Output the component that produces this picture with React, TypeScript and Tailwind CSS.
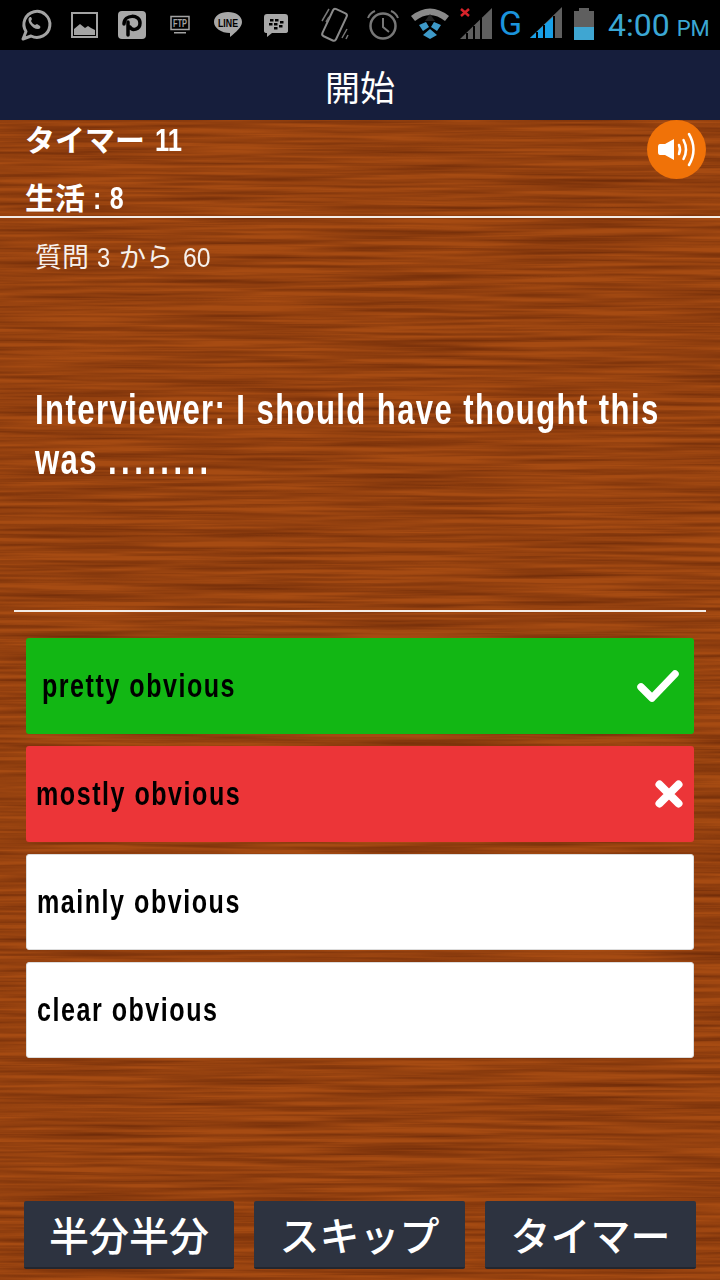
const sans = "font-['Liberation_Sans','Noto_Sans_CJK_JP',sans-serif]";

// Notification icons on the left of the status bar
const StatusLeft = () => (
  <svg width="360" height="50" viewBox="0 0 360 50" className="shrink-0">
    {/* whatsapp */}
    <path d="M23 39l3-7.500a13 13 0 1 1 5 4.500z" fill="none" stroke="#a3a3a3" strokeWidth="3" strokeLinejoin="round" />
    <path d="M30 17c-2 1-2 4 0 7s5 5 8 5c2 0 3-2 2-3l-3-2-2 1c-2-1-3-2-4-4l1-2-1-2z" fill="#a3a3a3" />
    {/* gallery */}
    <rect x="72" y="13" width="25" height="24" fill="none" stroke="#a3a3a3" strokeWidth="2" />
    <path d="M74 35v-6l6-5 5 4 3-2 3 2 4 2v5z" fill="#a3a3a3" />
    {/* pinterest-style tile */}
    <rect x="118" y="11" width="28" height="28" rx="4" fill="#a8a8a8" />
    <path d="M128 35V22M124 24c0-10 16-10 16-1 0 7-8 8-10 4" fill="none" stroke="#000" strokeWidth="3.500" strokeLinecap="round" />
    {/* ftp */}
    <rect x="171" y="16.500" width="18" height="13" fill="none" stroke="#a3a3a3" strokeWidth="1.500" />
    <text x="180" y="27" textAnchor="middle" fontSize="10" fontWeight="700" fill="#a3a3a3" fontFamily="Liberation Sans, sans-serif" textLength="14" lengthAdjust="spacingAndGlyphs">FTP</text>
    <rect x="174" y="32" width="12" height="1.500" fill="#a3a3a3" />
    {/* line */}
    <path d="M228 12c8 0 14 4 14 10 0 5-6 10-12 15v-4c-9 0-16-5-16-11 0-6 6-10 14-10z" fill="#a8a8a8" />
    <text x="228" y="26.500" textAnchor="middle" fontSize="11" fontWeight="700" fill="#000" fontFamily="Liberation Sans, sans-serif" textLength="20" lengthAdjust="spacingAndGlyphs">LINE</text>
    {/* bbm */}
    <path d="M268 14h17q3 0 3 3v14q0 2-3 2h-13l-5 4v-4q-3 0-3-2v-14q0-3 3-3z" fill="#a8a8a8" />
    <g fill="#000">
      <rect x="270" y="19" width="3.500" height="2.500" />
      <rect x="275" y="19" width="3.500" height="2.500" />
      <rect x="269" y="23" width="3.500" height="2.500" />
      <rect x="274" y="23" width="3.500" height="2.500" />
      <rect x="280" y="21" width="3.500" height="2.500" />
      <rect x="279" y="25" width="3.500" height="2.500" />
      <rect x="274" y="27" width="3.500" height="2.500" />
    </g>
    {/* vibrate */}
    <rect x="327" y="10" width="15" height="30" rx="2.500" transform="rotate(25 335 25)" fill="none" stroke="#8a8a8a" strokeWidth="2" />
    <path d="M322 21l7-12M326 22l3-5M342 38l5-9M346 39l2-4" stroke="#777" strokeWidth="1.500" fill="none" />
  </svg>
);

// Alarm, wifi, signal and battery on the right
const StatusRight = () => (
  <svg width="360" height="50" viewBox="360 0 360 50" className="shrink-0">
    <circle cx="383" cy="26" r="12.500" fill="none" stroke="#777" strokeWidth="2.500" />
    <path d="M383 18v9l6 5" fill="none" stroke="#777" strokeWidth="2" />
    <path d="M368 18q2-5 7-7M391 11q5 2 7 7" fill="none" stroke="#777" strokeWidth="2" />
    {/* wifi */}
    <path d="M411 16q19-15 38 0l-4 5q-15-12-30 0z" fill="#8a8a8a" />
    <path d="M430 14l5 7h-10z" fill="#222" />
    <path d="M419 25l7-3 3 5-6 4zM441 25l-7-3-3 5 6 4zM430 29l7 6-7 4-7-4z" fill="#3e9ac9" />
    {/* first sim */}
    <path d="M461 9l8 7M469 9l-8 7" stroke="#d8232a" strokeWidth="2.500" fill="none" />
    <path d="M460 39l32-31v31z" fill="#5f5f5f" />
    <path d="M467 33v6M474 26v13M481 18v21" stroke="#000" strokeWidth="2" />
    {/* second sim */}
    <text x="499" y="35" fontSize="34" fill="#1b94dc" fontFamily="Roboto, sans-serif">G</text>
    <path d="M530 38l32-31v31z" fill="#5f5f5f" />
    <path d="M530 38l13-12v12zM544 25l10-9v22h-10z" fill="#18a0e8" />
    <path d="M537 32v6M544 25v13M554 16v22" stroke="#000" strokeWidth="2" />
    {/* battery */}
    <rect x="574" y="11" width="20" height="29" fill="#5f5f5f" />
    <rect x="579" y="8" width="10" height="3" fill="#5f5f5f" />
    <rect x="574" y="27" width="20" height="13" fill="#3fa6d2" />
  </svg>
);

const answerText = `inline-block origin-left whitespace-nowrap scale-x-[0.76] text-[33px] tracking-[2px] font-bold text-black ${sans}`;

const App = () => {
  return (
    <div className={`relative w-[720px] h-[1280px] overflow-hidden flex flex-col bg-[#9c4310] ${sans}`}>
      <div className="relative h-[50px] bg-black flex shrink-0">
        <StatusLeft />
        <StatusRight />
        <span className="absolute left-[608px] top-[5px] leading-[40px] text-[#3ba7d4] font-['Roboto',sans-serif] whitespace-nowrap">
          <span className="text-[32px]">4:00</span>
          <span className="text-[22px] ml-[7px]">PM</span>
        </span>
      </div>
      <div className="h-[70px] bg-[#161e3c] flex items-center justify-center shrink-0 text-white text-[35px] leading-none font-['Noto_Sans_CJK_JP',sans-serif]">
        開始
      </div>

      <div className="relative flex-1 flex flex-col">
        {/* wood grain */}
        <svg className="absolute inset-0 w-full h-full" xmlns="http://www.w3.org/2000/svg">
          <filter id="grain" x="0" y="0" width="100%" height="100%" colorInterpolationFilters="sRGB">
            <feTurbulence type="fractalNoise" baseFrequency="0.006 0.22" numOctaves="3" seed="7" />
            <feColorMatrix values="0 0 0 0 0.42  0 0 0 0 0.16  0 0 0 0 0.03  1.5 0 0 0 -0.45" />
          </filter>
          <rect width="100%" height="100%" fill="#a64b12" />
          <rect width="100%" height="100%" filter="url(#grain)" />
        </svg>

        <div className="relative flex flex-col flex-1">
          <div className="relative h-[98px] border-b-2 border-[#f3ece6]">
            <p className="absolute left-[25px] top-[-2px] text-[30px] leading-[40px] font-bold text-white whitespace-nowrap">
              <span className="font-['Noto_Sans_CJK_JP',sans-serif]">タイマー</span>
              <span className="inline-block origin-left scale-x-[0.8] ml-[10px] text-[32px]">11</span>
            </p>
            <p className="absolute left-[25px] top-[56px] text-[30px] leading-[40px] font-bold text-white whitespace-nowrap">
              <span className="font-['Noto_Sans_CJK_JP',sans-serif]">生活</span>
              <span className="inline-block origin-left scale-x-[0.78] ml-[8px] text-[32px] tracking-[1px]">: 8</span>
            </p>
            <button className="absolute left-[647px] top-[0px] w-[59px] h-[59px] rounded-full bg-[#f07208] flex items-center justify-center">
              <svg width="42" height="42" viewBox="0 0 42 42">
                <path d="M2 18q0-3 2-3h5l9-5v21l-9-5H4q-2 0-2-3z" fill="#fff" />
                <g fill="none" stroke="#fff" strokeWidth="2.500" strokeLinecap="round">
                  <path d="M23 16q2 4.500 0 9" />
                  <path d="M27.500 11q5 9.500 0 19" />
                  <path d="M33 5q9 15.500 0 31" />
                </g>
              </svg>
            </button>
          </div>
          <p className="mt-[20px] ml-[35px] h-[36px] text-[27px] leading-[36px] text-[#f7f1ec] whitespace-nowrap">
            <span className="font-['Noto_Sans_CJK_JP',sans-serif]">質問</span>
            <span className="inline-block w-[22px] ml-[8px] origin-left scale-x-[0.88]">3</span>
            <span className="font-['Noto_Sans_CJK_JP',sans-serif]">から</span>
            <span className="inline-block ml-[10px] origin-left scale-x-[0.92]">60</span>
          </p>

          <div className="mt-[111px] ml-[35px] h-[225px] text-[42px] leading-[50px] font-bold text-white">
            <p className="origin-left scale-x-[0.74] whitespace-nowrap tracking-[1.9px]">Interviewer: I should have thought this</p>
            <p className="origin-left scale-x-[0.74] whitespace-nowrap tracking-[1.9px]">was <span className="tracking-[6px]">........</span></p>
          </div>

          <div className="mx-[14px] h-[2px] bg-[#f3ece6]" />

          <div className="mt-[26px] mx-[26px] flex flex-col gap-[12px]">
            <div className="h-[96px] rounded-[3px] bg-[#12b714] flex items-center justify-between pl-[16px] pr-[14px]">
              <span className={answerText}>pretty obvious</span>
              <svg width="44" height="36" viewBox="0 0 44 36">
                <path d="M5 19l11 11L39 6" fill="none" stroke="#fff" strokeWidth="7.500" strokeLinecap="round" strokeLinejoin="round" />
              </svg>
            </div>
            <div className="h-[96px] rounded-[3px] bg-[#ec3538] flex items-center justify-between pl-[10px] pr-[8px]">
              <span className={answerText}>mostly obvious</span>
              <svg width="34" height="34" viewBox="0 0 34 34">
                <path d="M7.500 7.500l19 19M26.500 7.500l-19 19" fill="none" stroke="#fff" strokeWidth="8" strokeLinecap="round" />
              </svg>
            </div>
            <div className="h-[96px] rounded-[3px] bg-white border border-[#dcdcdc] flex items-center pl-[10px]">
              <span className={answerText}>mainly obvious</span>
            </div>
            <div className="h-[96px] rounded-[3px] bg-white border border-[#dcdcdc] flex items-center pl-[10px]">
              <span className={answerText}>clear obvious</span>
            </div>
          </div>

          <div className="mt-[143px] ml-[24px] flex gap-[20px] text-[40px] font-medium text-white font-['Noto_Sans_CJK_JP',sans-serif]">
            <button className="w-[210px] h-[68px] bg-[#2d3340] rounded-[2px] border-b-2 border-[#23262e] flex items-center justify-center">半分半分</button>
            <button className="w-[211px] h-[68px] bg-[#2d3340] rounded-[2px] border-b-2 border-[#23262e] flex items-center justify-center">スキップ</button>
            <button className="w-[211px] h-[68px] bg-[#2d3340] rounded-[2px] border-b-2 border-[#23262e] flex items-center justify-center">タイマー</button>
          </div>
        </div>
      </div>
    </div>
  );
};

export default App;
